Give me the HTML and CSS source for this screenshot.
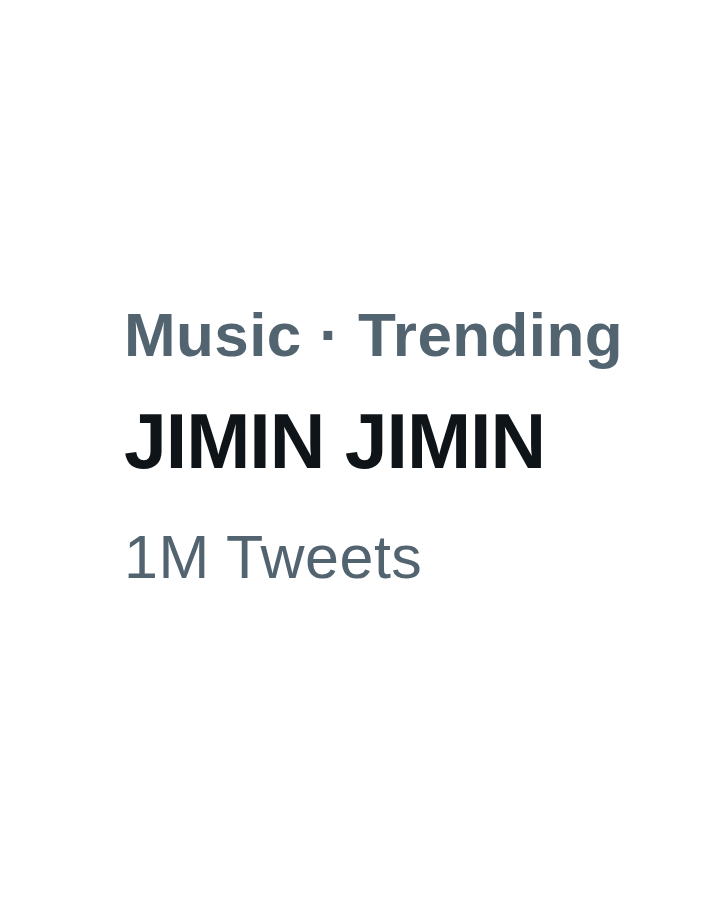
FILE: index.html
```html
<!DOCTYPE html>
<html>
<head>
<meta charset="utf-8">
<link rel="stylesheet" href="styles.css">
</head>
<body>
<div class="trend">
  <div class="meta">Music · Trending</div>
  <div class="title">JIMIN JIMIN</div>
  <div class="count">1M Tweets</div>
</div>
</body>
</html>
```
FILE: styles.css
```css
html, body {
  margin: 0;
  padding: 0;
  background: #ffffff;
}
.trend {
  display: flex;
  flex-direction: column;
  padding: 304px 0 0 124px;
}
.meta {
  font-family: "Liberation Sans", Arial, sans-serif;
  font-weight: 700;
  font-size: 62px;
  line-height: 62px;
  letter-spacing: 0.4px;
  color: #536471;
}
.title {
  font-family: "Liberation Sans", Arial, sans-serif;
  font-weight: 700;
  font-size: 77px;
  line-height: 78px;
  color: #0f1419;
  margin-top: 36px;
  letter-spacing: -1px;
}
.count {
  font-family: "Liberation Sans", Arial, sans-serif;
  font-weight: 400;
  font-size: 61px;
  line-height: 61px;
  letter-spacing: 0.5px;
  color: #536471;
  margin-top: 47px;
}
```
